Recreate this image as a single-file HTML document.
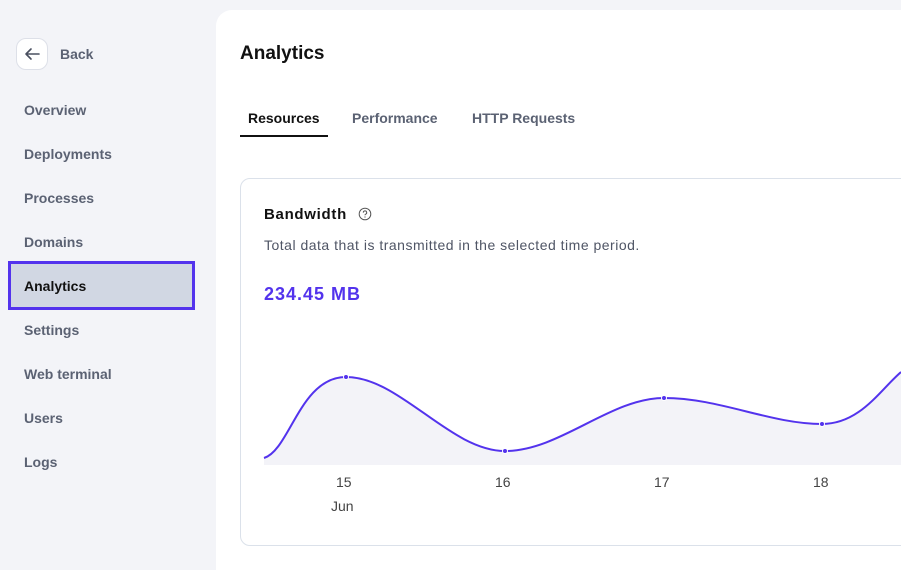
<!DOCTYPE html>
<html><head><meta charset="utf-8"><style>
*{margin:0;padding:0;box-sizing:border-box}
body{width:901px;height:553px;overflow:hidden;background:#f3f4f8;font-family:"Liberation Sans",sans-serif;position:relative}
.side a{position:absolute;left:24px;font-size:14px;font-weight:bold;color:#5b6273}
.back{position:absolute;left:16px;top:38px;width:32px;height:32px;border:1px solid #dde0e8;border-radius:10px;background:#fff}
.main{position:absolute;left:216px;top:10px;width:700px;height:560px;background:#fff;border-top-left-radius:16px}
.abs{position:absolute}
</style></head><body>
<div class="side">
<div class="back"><svg width="30" height="30" viewBox="0 0 30 30"><path d="M22 15H9M14 10l-5 5 5 5" fill="none" stroke="#4a5060" stroke-width="1.6" stroke-linecap="round" stroke-linejoin="round"/></svg></div>
<a style="left:60px;top:46px">Back</a>
<a style="top:102px">Overview</a>
<a style="top:146px">Deployments</a>
<a style="top:190px">Processes</a>
<a style="top:234px">Domains</a>
<div class="abs" style="left:8px;top:261px;width:187px;height:49px;border:3px solid #5333ed;background:#d1d7e3"></div>
<a style="top:278px;color:#111">Analytics</a>
<a style="top:322px">Settings</a>
<a style="top:366px">Web terminal</a>
<a style="top:410px">Users</a>
<a style="top:454px">Logs</a>
</div>
<div class="main"></div>
<div class="abs" style="left:240px;top:43px;font-size:19px;font-weight:bold;color:#111">Analytics</div>
<div class="abs" style="left:248px;top:110px;font-size:14px;font-weight:bold;color:#111">Resources</div>
<div class="abs" style="left:240px;top:135px;width:88px;height:2px;background:#111"></div>
<div class="abs" style="left:352px;top:110px;font-size:14px;font-weight:bold;color:#5b6273">Performance</div>
<div class="abs" style="left:472px;top:110px;font-size:14px;font-weight:bold;color:#5b6273">HTTP Requests</div>
<div class="abs" style="left:240px;top:178px;width:700px;height:368px;border:1px solid #dbe1ea;border-radius:10px"></div>
<div class="abs" style="left:264px;top:206px;font-size:15px;font-weight:bold;color:#111;letter-spacing:0.7px">Bandwidth</div>
<svg class="abs" style="left:358px;top:207px" width="14" height="14" viewBox="0 0 14 14"><circle cx="7" cy="7" r="5.8" fill="none" stroke="#555" stroke-width="1"/><path d="M5.3 5.6a1.7 1.7 0 1 1 2.3 1.6c-.5.2-.6.5-.6 1" fill="none" stroke="#555" stroke-width="1"/><circle cx="7" cy="10" r=".6" fill="#555"/></svg>
<div class="abs" style="left:264px;top:237px;font-size:14px;color:#4f5565;letter-spacing:0.5px">Total data that is transmitted in the selected time period.</div>
<div class="abs" style="left:264px;top:284px;font-size:18px;font-weight:bold;color:#5333ed;letter-spacing:1px">234.45 MB</div>
<svg class="abs" style="left:0;top:0" width="901" height="553">
<path d="M264 458C290 450 300 377 346 377C400 377 450 451 505 451C560 451 610 398 664 398C720 398 770 424 822 424C860 424 880 390 901 372L901 465L264 465Z" fill="#f3f3f8"/>
<path d="M264 458C290 450 300 377 346 377C400 377 450 451 505 451C560 451 610 398 664 398C720 398 770 424 822 424C860 424 880 390 901 372" fill="none" stroke="#5333ed" stroke-width="2"/>
<g fill="#5333ed" stroke="#fff" stroke-width="1"><circle cx="346" cy="377" r="2.5"/><circle cx="505" cy="451" r="2.5"/><circle cx="664" cy="398" r="2.5"/><circle cx="822" cy="424" r="2.5"/></g>
</svg>
<div class="abs" style="left:336px;top:474px;font-size:14px;color:#444">15</div>
<div class="abs" style="left:495px;top:474px;font-size:14px;color:#444">16</div>
<div class="abs" style="left:654px;top:474px;font-size:14px;color:#444">17</div>
<div class="abs" style="left:813px;top:474px;font-size:14px;color:#444">18</div>
<div class="abs" style="left:331px;top:498px;font-size:14px;color:#444">Jun</div>
</body></html>
